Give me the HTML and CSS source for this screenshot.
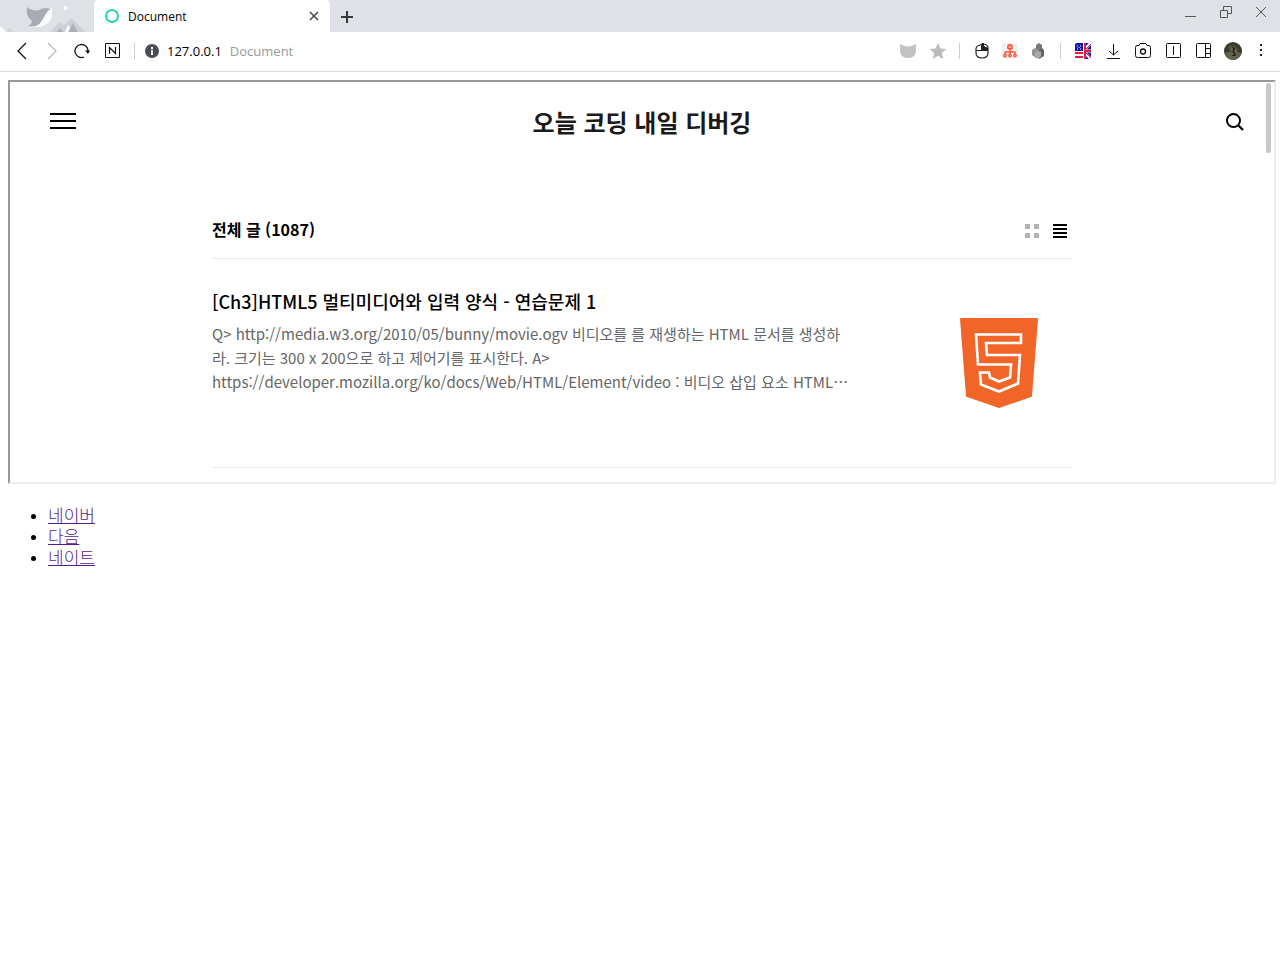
FILE: index.html
```html
<!DOCTYPE html>
<html lang="ko">
<head>
<meta charset="utf-8">
<meta name="viewport" content="width=device-width, initial-scale=1">
<title>Document</title>
<link rel="stylesheet" href="styles.css">
</head>
<body>
<header class="browser">
  <div class="tabbar">
    <svg class="theme-art" width="94" height="32" viewBox="0 0 94 32" aria-hidden="true">
      <path d="M0 26l6 6H0z" fill="#fff"/>
      <path d="M50 32l10-10 4 3 7-7 15 14z" fill="#cdd1d6"/>
      <path d="M65 32l3-7 5 7z" fill="#fff"/>
      <path d="M57 32l3-4 3 4zM68 32l5-9 5 9z" fill="#adb1b7"/>
      <path d="M52 8c-3 0-6 3-9 8-2 4-6 9-13 10 11 3 20-1 22-10z" fill="#fafbfc"/>
      <path d="M27 7c3 3 8 4 12 3 3-2 7-3 12-1-6 2-7 12-13 16-4 2-7 1-10 1 3-2 4-3 4-5-4-3-6-7-5-14z" fill="#a9adb3"/>
      <circle cx="65.500" cy="8" r="2" fill="#fff"/>
      <path d="M6 31l4-3 4 4z" fill="#cdd1d6"/>
    </svg>
    <div class="tab">
      <svg width="16" height="16" viewBox="0 0 16 16" aria-hidden="true"><circle cx="8" cy="8" r="6" fill="none" stroke="#2bd4b0" stroke-width="2"/></svg>
      <span class="tab-title">Document</span>
      <button class="icon" aria-label="Close tab"><svg width="12" height="12" viewBox="0 0 12 12"><path d="M2 2l8 8M10 2l-8 8" stroke="#444" stroke-width="1.500"/></svg></button>
    </div>
    <button class="icon new-tab" aria-label="New tab"><svg width="14" height="14" viewBox="0 0 14 14"><path d="M7 2v12M1 8h12" stroke="#37393c" stroke-width="2"/></svg></button>
    <div class="window-controls">
      <button class="icon" aria-label="Minimize"><svg width="12" height="12" viewBox="0 0 12 12"><path d="M0 10.500h11" stroke="#555"/></svg></button>
      <button class="icon" aria-label="Restore"><svg width="12" height="12" viewBox="0 0 12 12"><path d="M.5 4.500h7v7h-7zM3.500 4V.5h8v7H8" fill="none" stroke="#555"/></svg></button>
      <button class="icon" aria-label="Close"><svg width="12" height="12" viewBox="0 0 12 12"><path d="M1 1l10 10M11 1L1 11" stroke="#555"/></svg></button>
    </div>
  </div>
  <div class="toolbar">
    <div class="nav">
      <button class="icon" aria-label="Back"><svg width="16" height="18" viewBox="0 0 16 18"><path d="M12 1L4 9l8 8" fill="none" stroke="#111" stroke-width="1.300"/></svg></button>
      <button class="icon" aria-label="Forward"><svg width="16" height="18" viewBox="0 0 16 18"><path d="M4 1l8 8-8 8" fill="none" stroke="#bbb" stroke-width="1.300"/></svg></button>
      <button class="icon" aria-label="Reload"><svg width="16" height="16" viewBox="0 0 16 16"><path d="M10 14A6.500 6.500 0 1 1 14 8" fill="none" stroke="#111" stroke-width="1.300"/><path d="M11 7.500h5L14 11z" fill="#111"/></svg></button>
      <button class="icon" aria-label="Naver"><svg width="16" height="16" viewBox="0 0 16 16"><path d="M1.500 .5h14v14h-14z" fill="none" stroke="#111"/><path d="M5.500 11V4.500l6 6V4" fill="none" stroke="#111" stroke-width="1.200"/></svg></button>
    </div>
    <span class="divider"></span>
    <div class="address">
      <svg width="14" height="14" viewBox="0 0 14 14" aria-hidden="true"><circle cx="7" cy="7" r="7" fill="#484d56"/><path d="M6 3h2v2H6zM6 6h2v5H6z" fill="#fff"/></svg>
      <span class="host">127.0.0.1</span>
      <span class="page">Document</span>
    </div>
    <div class="tools">
      <button class="icon" aria-label="Whale pocket"><svg width="18" height="16" viewBox="0 0 18 16"><path d="M1 1l5 2q3 1 6 0l5-2v6q0 8-8 8T1 7z" fill="#c2c2c2"/></svg></button>
      <button class="icon" aria-label="Bookmark"><svg width="18" height="16" viewBox="0 0 18 16"><path d="M9 0l2.400 5.400 5.900.6-4.500 3.900L14.200 16 9 12.800 3.800 16l1.400-6.100L.7 6l5.900-.6z" fill="#bbb"/></svg></button>
    </div>
    <span class="divider"></span>
    <div class="tools extensions">
      <button class="icon" aria-label="Mouse gestures"><svg width="16" height="16" viewBox="0 0 16 16"><path d="M8 1h2q4 1 4 4v5q0 5-6 5t-6-5V6q0-3 4-4z" fill="#fff" stroke="#222" stroke-width="1.200"/><path d="M8 0h2v3l4 2v3H8z" fill="#222"/><path d="M2 7.500h12M7.500 2v6" stroke="#222"/></svg></button>
      <button class="icon" aria-label="Site map"><svg width="16" height="16" viewBox="0 0 16 16"><rect width="16" height="16" rx="1" fill="#f1f1f1"/><circle cx="8" cy="4" r="3" fill="#ff5433"/><path d="M8 7v4M3 12V9h10v3" fill="none" stroke="#ff5433" stroke-width="1.300"/><path d="M6.500 4h3" stroke="#fff"/><g fill="#fff" stroke="#ff5433" stroke-width="1.400"><circle cx="3" cy="12.500" r="1.200"/><circle cx="8" cy="12.500" r="1.200"/><circle cx="13" cy="12.500" r="1.200"/></g></svg></button>
      <button class="icon" aria-label="Blocks"><svg width="16" height="16" viewBox="0 0 16 16"><path d="M6 2l3-2 3 2v5l-3 2-3-2z" fill="#777"/><path d="M2 7l3-2 4 2v6l-3 2-4-3z" fill="#929292"/><path d="M9 7l3-2 2 2v6l-5 3z" fill="#666"/><path d="M5 10l3-2 3 1v4l-3 3-3-2z" fill="#aaa"/></svg></button>
    </div>
    <span class="divider"></span>
    <div class="tools wide">
      <button class="icon" aria-label="Translate"><svg width="16" height="16" viewBox="0 0 16 16"><rect width="16" height="16" rx="2" fill="#fff"/><path d="M2 0h6v8H0V2q0-2 2-2z" fill="#1414a0"/><path d="M2 3h1M5 3h1M3.500 4.500h1M2 6h1M5 6h1" stroke="#fff"/><path d="M0 9h8v2H0zM0 13h8v2H0z" fill="#e21b3c"/><path d="M9 0h5q2 0 2 2v12q0 2-2 2H9z" fill="#1414a0"/><path d="M9 8h7M9 7l7-7M9 9l7 7" stroke="#fff" stroke-width="3"/><path d="M9 0h2v16H9zM9 7h7v2H9z" fill="#e21b3c"/><path d="M11 6l5-5M11 10l5 5" stroke="#e21b3c"/></svg></button>
      <button class="icon" aria-label="Downloads"><svg width="16" height="16" viewBox="0 0 16 16"><path d="M8.500 1v11M4 8l4.500 4L13 8M2 15.500h13" fill="none" stroke="#111"/></svg></button>
      <button class="icon" aria-label="Capture"><svg width="18" height="16" viewBox="0 0 18 16"><path d="M3 2.500h2l1-2h6l1 2h2q1.500 0 1.500 2v8q0 2-2 2h-11q-2 0-2-2v-8q0-2 1.500-2z" fill="none" stroke="#111"/><circle cx="9" cy="8.500" r="2.500" fill="none" stroke="#111" stroke-width="1.300"/></svg></button>
      <button class="icon" aria-label="Split view"><svg width="16" height="16" viewBox="0 0 16 16"><rect x="1.500" y=".5" width="14" height="14" rx="1" fill="none" stroke="#111"/><path d="M8.500 3v9" stroke="#111"/></svg></button>
      <button class="icon" aria-label="Sidebar"><svg width="16" height="16" viewBox="0 0 16 16"><rect x="1.500" y=".5" width="14" height="14" rx="1" fill="none" stroke="#111"/><path d="M10.500 1v14M11 5.500h4M11 10.500h4" stroke="#111"/></svg></button>
      <button class="icon" aria-label="Profile"><svg width="18" height="18" viewBox="0 0 18 18"><circle cx="9" cy="9" r="9" fill="#373a2d"/><path d="M1 11q8-3 16 0-2 7-8 7t-8-7z" fill="#65604d"/><path d="M4 5l3-2 4 1 3 3-2 3H6z" fill="#54563a"/><path d="M8 5l3 1-1 3 2 5H8l1-5z" fill="#241e1e"/><path d="M7 7h2M11 9h2M8 12h2" stroke="#ad777d"/></svg></button>
      <button class="icon" aria-label="Menu"><svg width="16" height="16" viewBox="0 0 16 16"><path d="M7 1h2v2H7zM7 6h2v2H7zM7 11h2v2H7z" fill="#222"/></svg></button>
    </div>
  </div>
</header>
<main class="document">
  <section class="frame">
    <header class="blog-header">
      <button class="burger" aria-label="메뉴"><span></span><span></span><span></span></button>
      <h1 class="blog-title">오늘 코딩 내일 디버깅</h1>
      <button class="icon search" aria-label="검색"><svg width="20" height="20" viewBox="0 0 20 20"><circle cx="8.500" cy="8.500" r="6.500" fill="none" stroke="#000" stroke-width="2"/><path d="M13 13l5 5" stroke="#000" stroke-width="2.300"/></svg></button>
    </header>
    <div class="posts">
      <div class="list-header">
        <h2 class="list-title">전체 글 (1087)</h2>
        <button class="icon" aria-label="격자형 보기"><svg width="14" height="14" viewBox="0 0 14 14"><path d="M0 0h5v5H0zM9 0h5v5H9zM0 9h5v5H0zM9 9h5v5H9z" fill="#b3b3b3"/></svg></button>
        <button class="icon" aria-label="목록형 보기"><svg width="14" height="14" viewBox="0 0 14 14"><path d="M0 0h14v2H0zM0 4h14v2H0zM0 8h14v2H0zM0 12h14v2H0z"/></svg></button>
      </div>
      <article class="post">
        <div class="post-text">
          <h3 class="post-title">[Ch3]HTML5 멀티미디어와 입력 양식 - 연습문제 1</h3>
          <p class="excerpt">Q&gt; http://media.w3.org/2010/05/bunny/movie.ogv 비디오를 를 재생하는 HTML 문서를 생성하<br>라. 크기는 300 x 200으로 하고 제어기를 표시한다. A&gt;<br>https://developer.mozilla.org/ko/docs/Web/HTML/Element/video : 비디오 삽입 요소 HTML⋯</p>
        </div>
        <svg class="thumb" width="80" height="92" viewBox="0 0 80 92" role="img" aria-label="HTML5">
          <path d="M2 1h76q1 0 1 1l-6 77q0 1-1 1L40 91 8 80q-1 0-1-1L1 2q0-1 1-1z" fill="#f16529"/>
          <path d="M62 17.500H17l2 30h33l-1 13-11 4-9-4-1-5h-9l1 12 18 7 19-8 2-28.500H28l-1-12h35z" fill="none" stroke="#fff" stroke-width="2.600"/>
        </svg>
      </article>
    </div>
    <span class="scroll-thumb"></span>
  </section>
  <ul class="links">
    <li><a href="#naver">네이버</a></li>
    <li><a href="#daum">다음</a></li>
    <li><a href="#nate">네이트</a></li>
  </ul>
</main>
</body>
</html>
```
FILE: styles.css
```css
* { box-sizing: border-box; }
body {
  margin: 0;
  background: #fff;
  color: #000;
  font-family: "Noto Sans CJK KR", sans-serif;
}
h1, h2, h3, p { margin: 0; }
svg { display: block; flex: none; }
button { padding: 0; border: 0; background: none; cursor: pointer; }
.icon { display: flex; align-items: center; justify-content: center; flex: none; }

.browser { font-family: "Open Sans", "Noto Sans", sans-serif; }
.tabbar { display: flex; height: 32px; background: #dee1e6; }
.tab {
  display: flex;
  align-items: center;
  gap: 8px;
  width: 236px;
  padding: 0 10px;
  background: #fff;
  border-radius: 4px 4px 0 0;
}
.tab-title { flex: 1; font-size: 12px; }
.new-tab { width: 34px; }
.window-controls {
  display: flex;
  align-items: flex-start;
  gap: 23px;
  margin-left: auto;
  padding: 6px 13px 0 0;
}
.toolbar {
  display: flex;
  align-items: center;
  height: 40px;
  padding: 0 10px 1px 14px;
  border-bottom: 1px solid #d9d9d9;
}
.nav { display: flex; gap: 14px; margin-right: 14px; }
.nav .icon { width: 16px; }
.divider { width: 1px; height: 16px; background: #ccc; }
.address {
  display: flex;
  align-items: center;
  flex: 1;
  gap: 8px;
  padding-left: 10px;
  font-size: 13px;
}
.page { color: #999; }
.tools { display: flex; align-items: center; gap: 12px; margin-right: 12px; }
.extensions { margin: 0 14px; }
.wide { margin: 0 0 0 13px; }
.wide .icon { width: 18px; }
.wide .icon:last-child { margin-left: -2px; }

.document { padding: 8px 4px 0 8px; }
.frame {
  position: relative;
  min-height: 404px;
  border: 2px solid;
  border-color: #9a9a9a #eee #eee #9a9a9a;
}
.blog-header {
  display: grid;
  grid-template-columns: 29px 1fr 40px;
  align-items: center;
  height: 80px;
  padding: 0 29px 0 40px;
}
.burger { display: grid; gap: 5px; width: 26px; margin-bottom: 2px; }
.burger span { height: 2px; background: #000; }
.blog-title {
  color: #1a1a1a;
  font-size: 24px;
  font-weight: 700;
  line-height: 36px;
  text-align: center;
}
.search { justify-self: end; }
.posts { max-width: 860px; margin: 0 auto; }
.list-header {
  display: flex;
  align-items: center;
  gap: 14px;
  padding: 56px 5px 14px 0;
  border-bottom: 1px solid #e8e8e8;
}
.list-title { flex: 1; padding-bottom: 4px; font-size: 16px; font-weight: 700; line-height: 22px; }
.post {
  display: flex;
  justify-content: space-between;
  min-height: 209px;
  padding: 27px 33px 40px 0;
  border-bottom: 1px solid #e8e8e8;
}
.post-title { font-size: 18px; font-weight: 500; line-height: 30px; margin-bottom: 6px; }
.excerpt { color: #666; font-size: 15px; line-height: 24px; white-space: nowrap; }
.thumb { margin-top: 31px; }
.scroll-thumb {
  position: absolute;
  top: 1px;
  right: 3px;
  width: 5px;
  height: 70px;
  border-radius: 3px;
  background: #c8c8c8;
}
.links {
  margin: 22px 0 16px;
  padding-left: 40px;
  font-family: "Liberation Serif", "Noto Sans CJK KR", serif;
  font-size: 17px;
  font-weight: 300;
  line-height: 21px;
}
.links a { color: #551a8b; }
```
